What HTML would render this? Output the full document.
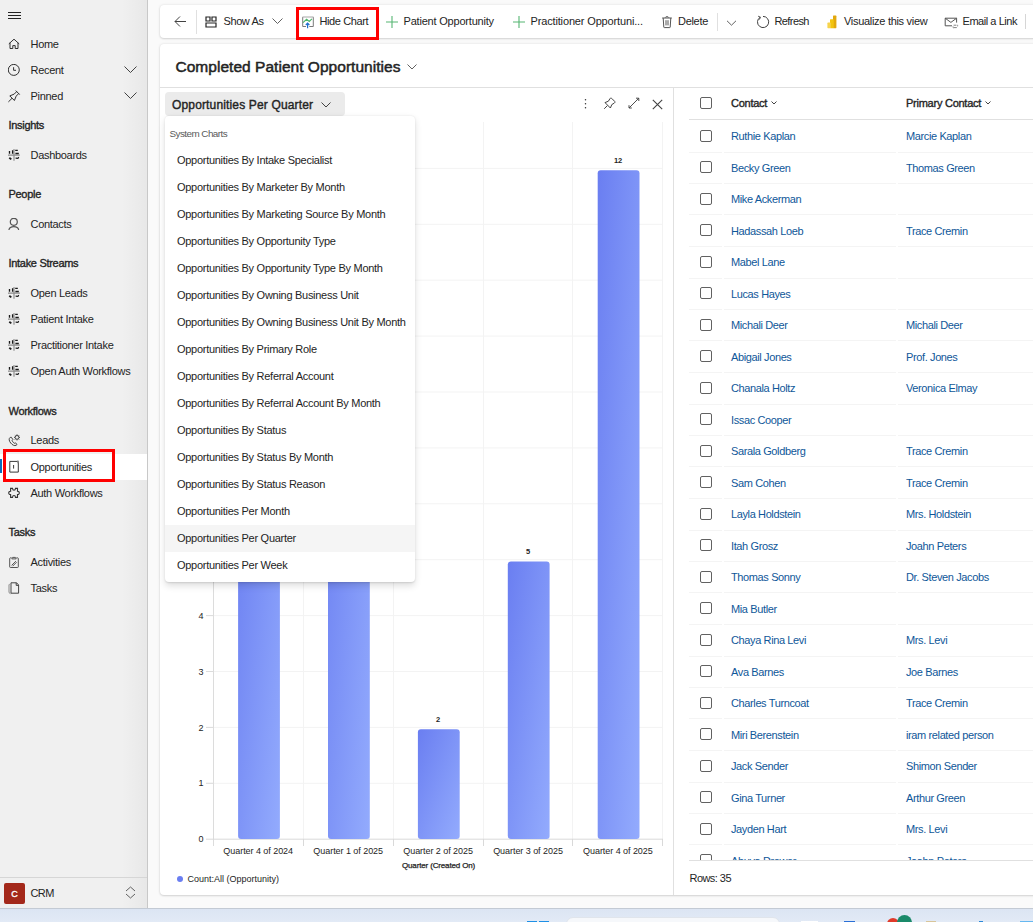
<!DOCTYPE html><html><head><meta charset="utf-8"><style>
html,body{margin:0;padding:0}
body{width:1033px;height:922px;overflow:hidden;position:relative;background:#fafafa;font-family:"Liberation Sans",sans-serif;color:#242424}
.a{position:absolute;white-space:nowrap}
</style></head><body>
<div class="a" style="left:0px;top:0px;width:147px;height:908px;background:#f0f0f0"></div>
<div class="a" style="left:122px;top:0px;width:25px;height:908px;background:linear-gradient(90deg,rgba(0,0,0,0),rgba(0,0,0,0.035))"></div>
<div class="a" style="left:147px;top:0px;width:1px;height:908px;background:#c8c8c8"></div>
<svg class="a" style="left:8px;top:11px;" width="14" height="9" viewBox="0 0 14 9" fill="none" stroke="#424242" stroke-width="1"><path d="M0 1.5H13M0 4.5H13M0 7.5H13" stroke="#242424"/></svg>
<div class="a" style="left:0px;top:454px;width:147px;height:26px;background:#ffffff"></div>
<div class="a" style="left:0px;top:459px;width:2px;height:14px;background:#0f6cbd"></div>
<svg class="a" style="left:8px;top:38px;" width="13" height="15" viewBox="0 0 13 15" fill="none" stroke="#424242" stroke-width="1"><path d="M0.8 5.9L6 1.2L11.2 5.9 M2 4.8V10.5H4.8V7.6H7.2V10.5H10V4.8" stroke="#303030"/></svg>
<div class="a" style="left:30.5px;top:37.19px;font-size:11px;line-height:14px;font-weight:400;color:#242424;letter-spacing:-0.3px;">Home</div>
<svg class="a" style="left:8px;top:64px;" width="13" height="15" viewBox="0 0 13 15" fill="none" stroke="#424242" stroke-width="1"><circle cx="5.8" cy="5.9" r="5.5" stroke="#303030"/><path d="M5.6 3.2V6.3H8" stroke="#303030"/></svg>
<div class="a" style="left:30.5px;top:63.19px;font-size:11px;line-height:14px;font-weight:400;color:#242424;letter-spacing:-0.3px;">Recent</div>
<svg class="a" style="left:8px;top:90px;" width="13" height="15" viewBox="0 0 13 15" fill="none" stroke="#424242" stroke-width="1"><path d="M7.7 0.6L11.7 4.6 M8.7 1.6L6.2 4.1L1.8 5.9L6.4 10.5L8.2 6.1L10.7 3.6 M4 8.3L0.4 11.9" stroke="#303030"/></svg>
<div class="a" style="left:30.5px;top:89.19px;font-size:11px;line-height:14px;font-weight:400;color:#242424;letter-spacing:-0.3px;">Pinned</div>
<svg class="a" style="left:8px;top:149px;" width="13" height="15" viewBox="0 0 13 15" fill="none" stroke="#424242" stroke-width="1"><path d="M6 0V11.8M0 6.1H11.8" stroke="#8a8a8a" stroke-width="1.15"/><path d="M1.5 2.1V4.7M4.6 1.2V4.7M7.2 1.4H9.8M7.4 4.5H10.8" stroke="#1a1a1a" stroke-width="1.35"/><path d="M1.3 8.7L3.3 10.4" stroke="#1a1a1a" stroke-width="1.8"/><path d="M7.6 9.2L9.9 9.3L10.8 8.2" stroke="#1a1a1a" stroke-width="1.2"/></svg>
<div class="a" style="left:30.5px;top:148.19px;font-size:11px;line-height:14px;font-weight:400;color:#242424;letter-spacing:-0.3px;">Dashboards</div>
<svg class="a" style="left:8px;top:218px;" width="13" height="15" viewBox="0 0 13 15" fill="none" stroke="#424242" stroke-width="1"><circle cx="5.8" cy="3.8" r="3.5" stroke="#555" stroke-width="1.2"/><path d="M0.9 12C1.4 9.6 3.3 8.7 5.8 8.7S10.2 9.6 10.7 12" stroke="#555" stroke-width="1.2"/></svg>
<div class="a" style="left:30.5px;top:217.19px;font-size:11px;line-height:14px;font-weight:400;color:#242424;letter-spacing:-0.3px;">Contacts</div>
<svg class="a" style="left:8px;top:287px;" width="13" height="15" viewBox="0 0 13 15" fill="none" stroke="#424242" stroke-width="1"><path d="M6 0V11.8M0 6.1H11.8" stroke="#8a8a8a" stroke-width="1.15"/><path d="M1.5 2.1V4.7M4.6 1.2V4.7M7.2 1.4H9.8M7.4 4.5H10.8" stroke="#1a1a1a" stroke-width="1.35"/><path d="M1.3 8.7L3.3 10.4" stroke="#1a1a1a" stroke-width="1.8"/><path d="M7.6 9.2L9.9 9.3L10.8 8.2" stroke="#1a1a1a" stroke-width="1.2"/></svg>
<div class="a" style="left:30.5px;top:286.19px;font-size:11px;line-height:14px;font-weight:400;color:#242424;letter-spacing:-0.3px;">Open Leads</div>
<svg class="a" style="left:8px;top:313px;" width="13" height="15" viewBox="0 0 13 15" fill="none" stroke="#424242" stroke-width="1"><path d="M6 0V11.8M0 6.1H11.8" stroke="#8a8a8a" stroke-width="1.15"/><path d="M1.5 2.1V4.7M4.6 1.2V4.7M7.2 1.4H9.8M7.4 4.5H10.8" stroke="#1a1a1a" stroke-width="1.35"/><path d="M1.3 8.7L3.3 10.4" stroke="#1a1a1a" stroke-width="1.8"/><path d="M7.6 9.2L9.9 9.3L10.8 8.2" stroke="#1a1a1a" stroke-width="1.2"/></svg>
<div class="a" style="left:30.5px;top:312.19px;font-size:11px;line-height:14px;font-weight:400;color:#242424;letter-spacing:-0.3px;">Patient Intake</div>
<svg class="a" style="left:8px;top:339px;" width="13" height="15" viewBox="0 0 13 15" fill="none" stroke="#424242" stroke-width="1"><path d="M6 0V11.8M0 6.1H11.8" stroke="#8a8a8a" stroke-width="1.15"/><path d="M1.5 2.1V4.7M4.6 1.2V4.7M7.2 1.4H9.8M7.4 4.5H10.8" stroke="#1a1a1a" stroke-width="1.35"/><path d="M1.3 8.7L3.3 10.4" stroke="#1a1a1a" stroke-width="1.8"/><path d="M7.6 9.2L9.9 9.3L10.8 8.2" stroke="#1a1a1a" stroke-width="1.2"/></svg>
<div class="a" style="left:30.5px;top:338.19px;font-size:11px;line-height:14px;font-weight:400;color:#242424;letter-spacing:-0.3px;">Practitioner Intake</div>
<svg class="a" style="left:8px;top:365px;" width="13" height="15" viewBox="0 0 13 15" fill="none" stroke="#424242" stroke-width="1"><path d="M6 0V11.8M0 6.1H11.8" stroke="#8a8a8a" stroke-width="1.15"/><path d="M1.5 2.1V4.7M4.6 1.2V4.7M7.2 1.4H9.8M7.4 4.5H10.8" stroke="#1a1a1a" stroke-width="1.35"/><path d="M1.3 8.7L3.3 10.4" stroke="#1a1a1a" stroke-width="1.8"/><path d="M7.6 9.2L9.9 9.3L10.8 8.2" stroke="#1a1a1a" stroke-width="1.2"/></svg>
<div class="a" style="left:30.5px;top:364.19px;font-size:11px;line-height:14px;font-weight:400;color:#242424;letter-spacing:-0.3px;">Open Auth Workflows</div>
<svg class="a" style="left:8px;top:434px;" width="13" height="15" viewBox="0 0 13 15" fill="none" stroke="#424242" stroke-width="1"><path d="M2.2 3.4C0.6 4.6 0.9 6.8 2.7 9C4.5 11.2 6.6 12.1 8 11.3L9 10.5L7.5 8.8L6.4 9.3C5.6 8.9 4.4 7.5 4.1 6.5L4.8 5.5L3.4 3.3Z" stroke="#404040"/><circle cx="9" cy="3.4" r="1.9" stroke="#404040"/><path d="M9 0.4V1.3M9 5.5V6.4M6 3.4H6.9M11.1 3.4H12M6.9 1.3L7.5 1.9M10.5 4.9L11.1 5.5M11.1 1.3L10.5 1.9M7.5 4.9L6.9 5.5" stroke="#404040"/></svg>
<div class="a" style="left:30.5px;top:433.19px;font-size:11px;line-height:14px;font-weight:400;color:#242424;letter-spacing:-0.3px;">Leads</div>
<svg class="a" style="left:8px;top:458px;" width="13" height="15" viewBox="0 0 13 15" fill="none" stroke="#424242" stroke-width="1"><path d="M1.8 3.4H10.3V14.1H1.8Z M5.6 7V10.6" stroke="#383838"/><path d="M9.9 2.4V5.2" stroke="#8a8a8a" stroke-width="1.3"/></svg>
<div class="a" style="left:30.5px;top:459.69px;font-size:11px;line-height:14px;font-weight:400;color:#242424;letter-spacing:-0.3px;">Opportunities</div>
<svg class="a" style="left:8px;top:486px;" width="13" height="15" viewBox="0 0 13 15" fill="none" stroke="#424242" stroke-width="1"><path d="M2.6 2.4H4.5C4.7 4.9 7.3 4.9 7.5 2.4H9.5V5.3C11.9 5.1 11.9 8.7 9.5 8.5V11.4H7.5C7.3 8.9 4.7 8.9 4.5 11.4H2.6V8.5C0.1 8.7 0.1 5.1 2.6 5.3Z" stroke="#333" stroke-width="1.1"/></svg>
<div class="a" style="left:30.5px;top:485.79px;font-size:11px;line-height:14px;font-weight:400;color:#242424;letter-spacing:-0.3px;">Auth Workflows</div>
<svg class="a" style="left:8px;top:556px;" width="13" height="15" viewBox="0 0 13 15" fill="none" stroke="#424242" stroke-width="1"><path d="M3.6 1.8H2.4C2 1.8 1.7 2.1 1.7 2.5V10.9C1.7 11.3 2 11.5 2.4 11.5H9.6C10 11.5 10.3 11.3 10.3 10.9V2.5C10.3 2.1 10 1.8 9.6 1.8H8.4 M3.8 2.9H8.2L7.4 1.4H4.6Z M3.6 9.4L7.9 5.1 M4.6 10.2L8.6 6.2" stroke="#555"/></svg>
<div class="a" style="left:30.5px;top:555.19px;font-size:11px;line-height:14px;font-weight:400;color:#242424;letter-spacing:-0.3px;">Activities</div>
<svg class="a" style="left:8px;top:582px;" width="13" height="15" viewBox="0 0 13 15" fill="none" stroke="#424242" stroke-width="1"><path d="M3 0.8H8.6L10.6 3V11.2H3Z M8.2 0.8V3.4H10.6" stroke="#444"/><path d="M2.2 1.6L1 2.8V10.6L2.6 11.8" stroke="#888"/></svg>
<div class="a" style="left:30.5px;top:581.19px;font-size:11px;line-height:14px;font-weight:400;color:#242424;letter-spacing:-0.3px;">Tasks</div>
<div class="a" style="left:8.5px;top:118.19px;font-size:11px;line-height:14px;font-weight:400;color:#242424;letter-spacing:-0.3px;-webkit-text-stroke:0.35px #242424">Insights</div>
<div class="a" style="left:8.5px;top:187.19px;font-size:11px;line-height:14px;font-weight:400;color:#242424;letter-spacing:-0.3px;-webkit-text-stroke:0.35px #242424">People</div>
<div class="a" style="left:8.5px;top:256.19px;font-size:11px;line-height:14px;font-weight:400;color:#242424;letter-spacing:-0.3px;-webkit-text-stroke:0.35px #242424">Intake Streams</div>
<div class="a" style="left:8.5px;top:404.19px;font-size:11px;line-height:14px;font-weight:400;color:#242424;letter-spacing:-0.3px;-webkit-text-stroke:0.35px #242424">Workflows</div>
<div class="a" style="left:8.5px;top:525.19px;font-size:11px;line-height:14px;font-weight:400;color:#242424;letter-spacing:-0.3px;-webkit-text-stroke:0.35px #242424">Tasks</div>
<svg class="a" style="left:124px;top:66px;" width="13" height="8" viewBox="0 0 13 8" fill="none" stroke="#424242" stroke-width="1"><path d="M0.5 0.5L6.5 6.5L12.5 0.5" stroke="#424242"/></svg>
<svg class="a" style="left:124px;top:92px;" width="13" height="8" viewBox="0 0 13 8" fill="none" stroke="#424242" stroke-width="1"><path d="M0.5 0.5L6.5 6.5L12.5 0.5" stroke="#424242"/></svg>
<div class="a" style="left:3px;top:449px;width:106px;height:27px;border:3px solid #ff0000"></div>
<div class="a" style="left:0px;top:877px;width:147px;height:1px;background:#d6d6d6"></div>
<div class="a" style="left:4px;top:883px;width:21px;height:21px;background:#a3281a;border-radius:2px"></div>
<div class="a" style="left:4.0px;top:887.88px;font-size:9px;line-height:12px;font-weight:400;color:#ffffff;letter-spacing:0px;-webkit-text-stroke:0.35px #fff"><span style="display:block;width:21px;text-align:center">C</span></div>
<div class="a" style="left:30.5px;top:886.49px;font-size:11px;line-height:14px;font-weight:400;color:#242424;letter-spacing:-0.6px;">CRM</div>
<svg class="a" style="left:125px;top:886px;" width="11" height="13" viewBox="0 0 11 13" fill="none" stroke="#424242" stroke-width="1"><path d="M1 5L5.5 1L10 5M1 8L5.5 12L10 8" stroke="#616161"/></svg>
<div class="a" style="left:0px;top:909px;width:1033px;height:13px;background:linear-gradient(180deg,#dce5f3,#e2eaf6)"></div>
<div class="a" style="left:0px;top:908px;width:1033px;height:1px;background:#c3cad4"></div>
<div class="a" style="left:527px;top:921px;width:10px;height:2px;background:#1e90e6"></div>
<div class="a" style="left:539px;top:921px;width:10px;height:2px;background:#1e90e6"></div>
<div class="a" style="left:566px;top:917px;width:212px;height:12px;background:#f6f8fb;border-radius:8px;border:1px solid #e0e5ec"></div>
<div class="a" style="left:801px;top:921px;width:17px;height:3px;background:#fff"></div>
<div class="a" style="left:844px;top:921px;width:11px;height:3px;background:#2a6fd6"></div>
<div class="a" style="left:887px;top:918px;width:12px;height:6px;background:#e03a2a;border-radius:6px 6px 0 0"></div>
<div class="a" style="left:897px;top:915px;width:15px;height:15px;background:#1a8a6a;border-radius:50%"></div>
<div class="a" style="left:926px;top:921px;width:10px;height:3px;background:#d8c59a"></div>
<div class="a" style="left:979px;top:921px;width:4px;height:3px;background:#2b88d8"></div>
<div class="a" style="left:1020px;top:921px;width:13px;height:3px;background:#66b8f0"></div>
<div class="a" style="left:160px;top:5px;width:900px;height:33px;background:#fff;border-radius:4px;box-shadow:0 0 3px rgba(0,0,0,.11),0 1px 2px rgba(0,0,0,.12)"></div>
<svg class="a" style="left:174px;top:16px;" width="13" height="11" viewBox="0 0 13 11" fill="none" stroke="#424242" stroke-width="1"><path d="M6 0.5L1 5.5L6 10.5M1 5.5H12" stroke="#424242"/></svg>
<div class="a" style="left:196px;top:10px;width:1px;height:24px;background:#e0e0e0"></div>
<svg class="a" style="left:205px;top:16px;" width="13" height="12" viewBox="0 0 13 12" fill="none" stroke="#424242" stroke-width="1"><path d="M1 1H5V5H1Z M7 1H11V5H7Z M1 7H11V11H1Z" stroke="#242424" stroke-width="1.2"/></svg>
<div class="a" style="left:223.5px;top:14.39px;font-size:11px;line-height:14px;font-weight:400;color:#242424;letter-spacing:-0.4px;">Show As</div>
<svg class="a" style="left:272px;top:18px;" width="11" height="7" viewBox="0 0 11 7" fill="none" stroke="#424242" stroke-width="1"><path d="M0.5 0.5L5.5 5.5L10.5 0.5" stroke="#616161"/></svg>
<div class="a" style="left:296px;top:7px;width:77px;height:27px;border:3px solid #ff0000"></div>
<svg class="a" style="left:302px;top:16px;" width="12" height="13" viewBox="0 0 12 13" fill="none" stroke="#424242" stroke-width="1"><path d="M0.5 1H11.5" stroke="#c8c8c8" stroke-width="1.6"/><path d="M4 10.5H0.7V1.2 M11.3 1.2V10.5H7.3" stroke="#7a7a7a"/><path d="M1 6.6L4.6 3.3L7.3 5.4L9.9 2.9" stroke="#4cb56a" stroke-width="1.1"/><path d="M5.6 12.2V7.4M3.8 9L5.6 7.2L7.4 9" stroke="#1f6fce" stroke-width="1.2"/></svg>
<div class="a" style="left:319.5px;top:14.39px;font-size:11px;line-height:14px;font-weight:400;color:#242424;letter-spacing:-0.4px;">Hide Chart</div>
<svg class="a" style="left:386px;top:16px;" width="12" height="12" viewBox="0 0 12 12" fill="none" stroke="#424242" stroke-width="1"><path d="M6 0V12M0 6H12" stroke="#56b673" stroke-width="1.1"/></svg>
<div class="a" style="left:403.5px;top:14.39px;font-size:11px;line-height:14px;font-weight:400;color:#242424;letter-spacing:-0.2px;">Patient Opportunity</div>
<svg class="a" style="left:513px;top:16px;" width="12" height="12" viewBox="0 0 12 12" fill="none" stroke="#424242" stroke-width="1"><path d="M6 0V12M0 6H12" stroke="#56b673" stroke-width="1.1"/></svg>
<div class="a" style="left:530.5px;top:14.39px;font-size:11px;line-height:14px;font-weight:400;color:#242424;letter-spacing:-0.15px;">Practitioner Opportuni...</div>
<svg class="a" style="left:661px;top:15px;" width="12" height="14" viewBox="0 0 12 14" fill="none" stroke="#424242" stroke-width="1"><path d="M1.2 3H10.8M4.2 2.6C4.4 1.4 7.6 1.4 7.8 2.6M2.2 3L2.8 12.2C2.8 12.5 3 12.6 3.3 12.6H8.7C9 12.6 9.2 12.5 9.2 12.2L9.8 3M5 5.2V10.4M7 5.2V10.4" stroke="#555"/></svg>
<div class="a" style="left:678.0px;top:14.39px;font-size:11px;line-height:14px;font-weight:400;color:#242424;letter-spacing:-0.3px;">Delete</div>
<div class="a" style="left:717px;top:13px;width:1px;height:18px;background:#e0e0e0"></div>
<svg class="a" style="left:726px;top:20px;" width="11" height="7" viewBox="0 0 11 7" fill="none" stroke="#424242" stroke-width="1"><path d="M1 0.8L5.5 5.2L10 0.8" stroke="#616161"/></svg>
<svg class="a" style="left:756px;top:15px;" width="14" height="14" viewBox="0 0 14 14" fill="none" stroke="#424242" stroke-width="1"><path d="M4.2 2.2A5.6 5.6 0 1 0 7 1.4" stroke="#424242"/><path d="M2.2 1.2L4.4 2.3L3.4 4.5" stroke="#424242"/></svg>
<div class="a" style="left:774.5px;top:14.39px;font-size:11px;line-height:14px;font-weight:400;color:#242424;letter-spacing:-0.6px;">Refresh</div>
<svg class="a" style="left:827px;top:15px;" width="10" height="14" viewBox="0 0 10 14" fill="none" stroke="#424242" stroke-width="1"><rect x="6" y="0.6" width="3.4" height="12.6" rx="0.6" fill="#e2a80e" stroke="none"/><rect x="3" y="4.2" width="3.8" height="9" rx="0.6" fill="#f2c40f" stroke="none"/><rect x="0.4" y="7.6" width="3.4" height="5.6" rx="0.6" fill="#f7d44c" stroke="none"/></svg>
<div class="a" style="left:844.0px;top:14.39px;font-size:11px;line-height:14px;font-weight:400;color:#242424;letter-spacing:-0.3px;">Visualize this view</div>
<svg class="a" style="left:944px;top:17px;" width="15" height="12" viewBox="0 0 15 12" fill="none" stroke="#424242" stroke-width="1"><path d="M1.2 1.2H12.6V5.6M8 8.8H1.2V1.2L6.9 5.4L12.6 1.2" stroke="#555"/><path d="M9.6 8.2H12M10 10.6H12.8M9 9.4C8.6 10.4 9.2 11 10 10.6M13.6 9.4C14 8.4 13.4 7.8 12.6 8.2" stroke="#777" stroke-width="0.9"/></svg>
<div class="a" style="left:962.5px;top:14.39px;font-size:11px;line-height:14px;font-weight:400;color:#242424;letter-spacing:-0.45px;">Email a Link</div>
<div class="a" style="left:1025px;top:14px;width:1px;height:15px;background:#d6d6d6"></div>
<div class="a" style="left:160px;top:44px;width:900px;height:851px;background:#fff;border-radius:4px;box-shadow:0 0 3px rgba(0,0,0,.11),0 1px 2px rgba(0,0,0,.12)"></div>
<div class="a" style="left:175.5px;top:56.93px;font-size:15.5px;line-height:20px;font-weight:400;color:#242424;letter-spacing:0.03px;-webkit-text-stroke:0.5px #242424">Completed Patient Opportunities</div>
<svg class="a" style="left:407px;top:64px;" width="10" height="6" viewBox="0 0 10 6" fill="none" stroke="#424242" stroke-width="1"><path d="M0.5 0.5L5 5L9.5 0.5" stroke="#616161"/></svg>
<div class="a" style="left:160px;top:87px;width:900px;height:1px;background:#e0e0e0"></div>
<div class="a" style="left:673px;top:88px;width:1px;height:807px;background:#e0e0e0"></div>
<svg class="a" style="left:0;top:0" width="1033" height="922"><defs><linearGradient id="g" x1="0" y1="0" x2="1" y2="1"><stop offset="0" stop-color="#6a7ef1"/><stop offset="1" stop-color="#93abfd"/></linearGradient></defs><line x1="206" y1="783.3" x2="663" y2="783.3" stroke="#f3f3f3" stroke-width="1"/><line x1="206" y1="783.3" x2="213.3" y2="783.3" stroke="#dcdcdc" stroke-width="1"/><line x1="206" y1="727.4" x2="663" y2="727.4" stroke="#f3f3f3" stroke-width="1"/><line x1="206" y1="727.4" x2="213.3" y2="727.4" stroke="#dcdcdc" stroke-width="1"/><line x1="206" y1="671.5" x2="663" y2="671.5" stroke="#f3f3f3" stroke-width="1"/><line x1="206" y1="671.5" x2="213.3" y2="671.5" stroke="#dcdcdc" stroke-width="1"/><line x1="206" y1="615.6" x2="663" y2="615.6" stroke="#f3f3f3" stroke-width="1"/><line x1="206" y1="615.6" x2="213.3" y2="615.6" stroke="#dcdcdc" stroke-width="1"/><line x1="206" y1="559.7" x2="663" y2="559.7" stroke="#f3f3f3" stroke-width="1"/><line x1="206" y1="559.7" x2="213.3" y2="559.7" stroke="#dcdcdc" stroke-width="1"/><line x1="206" y1="503.8" x2="663" y2="503.8" stroke="#f3f3f3" stroke-width="1"/><line x1="206" y1="503.8" x2="213.3" y2="503.8" stroke="#dcdcdc" stroke-width="1"/><line x1="206" y1="447.9" x2="663" y2="447.9" stroke="#f3f3f3" stroke-width="1"/><line x1="206" y1="447.9" x2="213.3" y2="447.9" stroke="#dcdcdc" stroke-width="1"/><line x1="206" y1="392.0" x2="663" y2="392.0" stroke="#f3f3f3" stroke-width="1"/><line x1="206" y1="392.0" x2="213.3" y2="392.0" stroke="#dcdcdc" stroke-width="1"/><line x1="206" y1="336.1" x2="663" y2="336.1" stroke="#f3f3f3" stroke-width="1"/><line x1="206" y1="336.1" x2="213.3" y2="336.1" stroke="#dcdcdc" stroke-width="1"/><line x1="206" y1="280.2" x2="663" y2="280.2" stroke="#f3f3f3" stroke-width="1"/><line x1="206" y1="280.2" x2="213.3" y2="280.2" stroke="#dcdcdc" stroke-width="1"/><line x1="206" y1="224.3" x2="663" y2="224.3" stroke="#f3f3f3" stroke-width="1"/><line x1="206" y1="224.3" x2="213.3" y2="224.3" stroke="#dcdcdc" stroke-width="1"/><line x1="206" y1="168.4" x2="663" y2="168.4" stroke="#f3f3f3" stroke-width="1"/><line x1="206" y1="168.4" x2="213.3" y2="168.4" stroke="#dcdcdc" stroke-width="1"/><line x1="303.5" y1="122" x2="303.5" y2="839" stroke="#f3f3f3" stroke-width="1"/><line x1="303.5" y1="839" x2="303.5" y2="846" stroke="#d9d9d9" stroke-width="1"/><line x1="393.5" y1="122" x2="393.5" y2="839" stroke="#f3f3f3" stroke-width="1"/><line x1="393.5" y1="839" x2="393.5" y2="846" stroke="#d9d9d9" stroke-width="1"/><line x1="483.5" y1="122" x2="483.5" y2="839" stroke="#f3f3f3" stroke-width="1"/><line x1="483.5" y1="839" x2="483.5" y2="846" stroke="#d9d9d9" stroke-width="1"/><line x1="572.5" y1="122" x2="572.5" y2="839" stroke="#f3f3f3" stroke-width="1"/><line x1="572.5" y1="839" x2="572.5" y2="846" stroke="#d9d9d9" stroke-width="1"/><line x1="662.5" y1="122" x2="662.5" y2="839" stroke="#f3f3f3" stroke-width="1"/><line x1="662.5" y1="839" x2="662.5" y2="846" stroke="#d9d9d9" stroke-width="1"/><line x1="213.5" y1="122" x2="213.5" y2="846" stroke="#dcdcdc" stroke-width="1"/><line x1="206" y1="839.2" x2="663" y2="839.2" stroke="#d9d9d9" stroke-width="1"/><rect x="238.1" y="449.7" width="41.8" height="389.2" rx="3" fill="url(#g)"/><rect x="328.0" y="337.9" width="41.8" height="501.0" rx="3" fill="url(#g)"/><rect x="417.9" y="729.2" width="41.8" height="109.7" rx="3" fill="url(#g)"/><rect x="507.8" y="561.5" width="41.8" height="277.4" rx="3" fill="url(#g)"/><rect x="597.7" y="170.2" width="41.8" height="668.7" rx="3" fill="url(#g)"/></svg>
<div class="a" style="left:103.5px;width:100px;text-align:right;top:833.38px;font-size:9px;line-height:12px;font-weight:400;color:#242424;letter-spacing:0px">0</div>
<div class="a" style="left:103.5px;width:100px;text-align:right;top:777.48px;font-size:9px;line-height:12px;font-weight:400;color:#242424;letter-spacing:0px">1</div>
<div class="a" style="left:103.5px;width:100px;text-align:right;top:721.58px;font-size:9px;line-height:12px;font-weight:400;color:#242424;letter-spacing:0px">2</div>
<div class="a" style="left:103.5px;width:100px;text-align:right;top:665.68px;font-size:9px;line-height:12px;font-weight:400;color:#242424;letter-spacing:0px">3</div>
<div class="a" style="left:103.5px;width:100px;text-align:right;top:609.78px;font-size:9px;line-height:12px;font-weight:400;color:#242424;letter-spacing:0px">4</div>
<div class="a" style="left:103.5px;width:100px;text-align:right;top:553.88px;font-size:9px;line-height:12px;font-weight:400;color:#242424;letter-spacing:0px">5</div>
<div class="a" style="left:103.5px;width:100px;text-align:right;top:497.98px;font-size:9px;line-height:12px;font-weight:400;color:#242424;letter-spacing:0px">6</div>
<div class="a" style="left:103.5px;width:100px;text-align:right;top:442.08px;font-size:9px;line-height:12px;font-weight:400;color:#242424;letter-spacing:0px">7</div>
<div class="a" style="left:103.5px;width:100px;text-align:right;top:386.18px;font-size:9px;line-height:12px;font-weight:400;color:#242424;letter-spacing:0px">8</div>
<div class="a" style="left:103.5px;width:100px;text-align:right;top:330.28px;font-size:9px;line-height:12px;font-weight:400;color:#242424;letter-spacing:0px">9</div>
<div class="a" style="left:103.5px;width:100px;text-align:right;top:274.38px;font-size:9px;line-height:12px;font-weight:400;color:#242424;letter-spacing:0px">10</div>
<div class="a" style="left:103.5px;width:100px;text-align:right;top:218.48px;font-size:9px;line-height:12px;font-weight:400;color:#242424;letter-spacing:0px">11</div>
<div class="a" style="left:103.5px;width:100px;text-align:right;top:162.58px;font-size:9px;line-height:12px;font-weight:400;color:#242424;letter-spacing:0px">12</div>
<div class="a" style="left:108.2px;width:300px;text-align:center;top:435.50px;font-size:7.5px;line-height:10px;font-weight:700;color:#242424;letter-spacing:-0.2px;">7</div>
<div class="a" style="left:198.2px;width:300px;text-align:center;top:323.70px;font-size:7.5px;line-height:10px;font-weight:700;color:#242424;letter-spacing:-0.2px;">9</div>
<div class="a" style="left:288.1px;width:300px;text-align:center;top:715.00px;font-size:7.5px;line-height:10px;font-weight:700;color:#242424;letter-spacing:-0.2px;">2</div>
<div class="a" style="left:378.0px;width:300px;text-align:center;top:547.30px;font-size:7.5px;line-height:10px;font-weight:700;color:#242424;letter-spacing:-0.2px;">5</div>
<div class="a" style="left:467.9px;width:300px;text-align:center;top:156.00px;font-size:7.5px;line-height:10px;font-weight:700;color:#242424;letter-spacing:-0.2px;">12</div>
<div class="a" style="left:108.2px;width:300px;text-align:center;top:844.68px;font-size:9px;line-height:12px;font-weight:400;color:#242424;letter-spacing:-0.05px;">Quarter 4 of 2024</div>
<div class="a" style="left:198.2px;width:300px;text-align:center;top:844.68px;font-size:9px;line-height:12px;font-weight:400;color:#242424;letter-spacing:-0.05px;">Quarter 1 of 2025</div>
<div class="a" style="left:288.1px;width:300px;text-align:center;top:844.68px;font-size:9px;line-height:12px;font-weight:400;color:#242424;letter-spacing:-0.05px;">Quarter 2 of 2025</div>
<div class="a" style="left:378.0px;width:300px;text-align:center;top:844.68px;font-size:9px;line-height:12px;font-weight:400;color:#242424;letter-spacing:-0.05px;">Quarter 3 of 2025</div>
<div class="a" style="left:467.9px;width:300px;text-align:center;top:844.68px;font-size:9px;line-height:12px;font-weight:400;color:#242424;letter-spacing:-0.05px;">Quarter 4 of 2025</div>
<div class="a" style="left:288.5px;width:300px;text-align:center;top:861.23px;font-size:8px;line-height:10px;font-weight:400;color:#242424;letter-spacing:-0.15px;-webkit-text-stroke:0.25px #242424">Quarter (Created On)</div>
<div class="a" style="left:177px;top:876px;width:6px;height:6px;background:#6a7ef1;border-radius:50%"></div>
<div class="a" style="left:187.4px;top:872.68px;font-size:9px;line-height:12px;font-weight:400;color:#242424;letter-spacing:0px;">Count:All (Opportunity)</div>
<div class="a" style="left:165px;top:92px;width:180px;height:24px;background:#ebebeb;border-radius:4px"></div>
<div class="a" style="left:172.0px;top:98.34px;font-size:12px;line-height:15px;font-weight:400;color:#242424;letter-spacing:0.15px;-webkit-text-stroke:0.4px #242424">Opportunities Per Quarter</div>
<svg class="a" style="left:321px;top:102px;" width="10" height="6" viewBox="0 0 10 6" fill="none" stroke="#424242" stroke-width="1"><path d="M0.5 0.5L5 5L9.5 0.5" stroke="#424242"/></svg>
<svg class="a" style="left:584px;top:98px;" width="3" height="12" viewBox="0 0 3 12" fill="none" stroke="#424242" stroke-width="1"><circle cx="1.5" cy="1.8" r="0.75" fill="#333" stroke="none"/><circle cx="1.5" cy="5.8" r="0.75" fill="#333" stroke="none"/><circle cx="1.5" cy="9.8" r="0.75" fill="#333" stroke="none"/></svg>
<svg class="a" style="left:603px;top:97px;" width="13" height="13" viewBox="0 0 13 13" fill="none" stroke="#424242" stroke-width="1"><path d="M7 1.6C7.4 1 8.2 0.9 8.7 1.4L11.6 4.3C12.1 4.8 12 5.6 11.4 6L8.8 7.6L7.4 11L2 5.6L5.4 4.2Z M4.4 8.6L1.2 11.8" stroke="#424242"/></svg>
<svg class="a" style="left:627px;top:97px;" width="13" height="13" viewBox="0 0 13 13" fill="none" stroke="#424242" stroke-width="1"><path d="M2 11L11.8 1.2M9 1.2H11.8V4M2 8.2V11H4.8" stroke="#424242" stroke-width="0.95"/></svg>
<svg class="a" style="left:652px;top:99px;" width="11" height="11" viewBox="0 0 11 11" fill="none" stroke="#424242" stroke-width="1"><path d="M0.8 0.8L10.2 10.2M10.2 0.8L0.8 10.2" stroke="#424242" stroke-width="1.1"/></svg>
<div class="a" style="left:689px;top:119px;width:344px;height:1px;background:#e0e0e0"></div>
<div class="a" style="left:700px;top:97px;width:10px;height:10px;border:1.3px solid #616161;border-radius:2px;background:#fff"></div>
<div class="a" style="left:731.0px;top:96.19px;font-size:11px;line-height:14px;font-weight:400;color:#242424;letter-spacing:-0.25px;-webkit-text-stroke:0.35px #242424">Contact</div>
<svg class="a" style="left:771px;top:101px;" width="6" height="4" viewBox="0 0 6 4" fill="none" stroke="#424242" stroke-width="1"><path d="M0.5 0.5L3 3L5.5 0.5" stroke="#424242"/></svg>
<div class="a" style="left:906.0px;top:96.19px;font-size:11px;line-height:14px;font-weight:400;color:#242424;letter-spacing:-0.25px;-webkit-text-stroke:0.35px #242424">Primary Contact</div>
<svg class="a" style="left:985px;top:101px;" width="6" height="4" viewBox="0 0 6 4" fill="none" stroke="#424242" stroke-width="1"><path d="M0.5 0.5L3 3L5.5 0.5" stroke="#424242"/></svg>
<div class="a" style="left:674px;top:120px;width:359px;height:740px;overflow:hidden"><div class="a" style="left:26px;top:10px;width:10px;height:10px;border:1.3px solid #616161;border-radius:2px;background:#fff"></div><div class="a" style="left:57.0px;top:9.09px;font-size:11px;line-height:14px;font-weight:400;color:#0f5799;letter-spacing:-0.38px;">Ruthie Kaplan</div><div class="a" style="left:232.0px;top:9.09px;font-size:11px;line-height:14px;font-weight:400;color:#0f5799;letter-spacing:-0.38px;">Marcie Kaplan</div><div class="a" style="left:15px;top:32px;width:33px;height:1px;background:#f4f4f4"></div><div class="a" style="left:50px;top:32px;width:172px;height:1px;background:#f4f4f4"></div><div class="a" style="left:224px;top:32px;width:140px;height:1px;background:#f4f4f4"></div><div class="a" style="left:26px;top:41px;width:10px;height:10px;border:1.3px solid #616161;border-radius:2px;background:#fff"></div><div class="a" style="left:57.0px;top:40.59px;font-size:11px;line-height:14px;font-weight:400;color:#0f5799;letter-spacing:-0.38px;">Becky Green</div><div class="a" style="left:232.0px;top:40.59px;font-size:11px;line-height:14px;font-weight:400;color:#0f5799;letter-spacing:-0.38px;">Thomas Green</div><div class="a" style="left:15px;top:63px;width:33px;height:1px;background:#f4f4f4"></div><div class="a" style="left:50px;top:63px;width:172px;height:1px;background:#f4f4f4"></div><div class="a" style="left:224px;top:63px;width:140px;height:1px;background:#f4f4f4"></div><div class="a" style="left:26px;top:73px;width:10px;height:10px;border:1.3px solid #616161;border-radius:2px;background:#fff"></div><div class="a" style="left:57.0px;top:72.09px;font-size:11px;line-height:14px;font-weight:400;color:#0f5799;letter-spacing:-0.38px;">Mike Ackerman</div><div class="a" style="left:15px;top:94px;width:33px;height:1px;background:#f4f4f4"></div><div class="a" style="left:50px;top:94px;width:172px;height:1px;background:#f4f4f4"></div><div class="a" style="left:224px;top:94px;width:140px;height:1px;background:#f4f4f4"></div><div class="a" style="left:26px;top:104px;width:10px;height:10px;border:1.3px solid #616161;border-radius:2px;background:#fff"></div><div class="a" style="left:57.0px;top:103.59px;font-size:11px;line-height:14px;font-weight:400;color:#0f5799;letter-spacing:-0.38px;">Hadassah Loeb</div><div class="a" style="left:232.0px;top:103.59px;font-size:11px;line-height:14px;font-weight:400;color:#0f5799;letter-spacing:-0.38px;">Trace Cremin</div><div class="a" style="left:15px;top:126px;width:33px;height:1px;background:#f4f4f4"></div><div class="a" style="left:50px;top:126px;width:172px;height:1px;background:#f4f4f4"></div><div class="a" style="left:224px;top:126px;width:140px;height:1px;background:#f4f4f4"></div><div class="a" style="left:26px;top:136px;width:10px;height:10px;border:1.3px solid #616161;border-radius:2px;background:#fff"></div><div class="a" style="left:57.0px;top:135.09px;font-size:11px;line-height:14px;font-weight:400;color:#0f5799;letter-spacing:-0.38px;">Mabel Lane</div><div class="a" style="left:15px;top:158px;width:33px;height:1px;background:#f4f4f4"></div><div class="a" style="left:50px;top:158px;width:172px;height:1px;background:#f4f4f4"></div><div class="a" style="left:224px;top:158px;width:140px;height:1px;background:#f4f4f4"></div><div class="a" style="left:26px;top:167px;width:10px;height:10px;border:1.3px solid #616161;border-radius:2px;background:#fff"></div><div class="a" style="left:57.0px;top:166.59px;font-size:11px;line-height:14px;font-weight:400;color:#0f5799;letter-spacing:-0.38px;">Lucas Hayes</div><div class="a" style="left:15px;top:189px;width:33px;height:1px;background:#f4f4f4"></div><div class="a" style="left:50px;top:189px;width:172px;height:1px;background:#f4f4f4"></div><div class="a" style="left:224px;top:189px;width:140px;height:1px;background:#f4f4f4"></div><div class="a" style="left:26px;top:199px;width:10px;height:10px;border:1.3px solid #616161;border-radius:2px;background:#fff"></div><div class="a" style="left:57.0px;top:198.09px;font-size:11px;line-height:14px;font-weight:400;color:#0f5799;letter-spacing:-0.38px;">Michali Deer</div><div class="a" style="left:232.0px;top:198.09px;font-size:11px;line-height:14px;font-weight:400;color:#0f5799;letter-spacing:-0.38px;">Michali Deer</div><div class="a" style="left:15px;top:220px;width:33px;height:1px;background:#f4f4f4"></div><div class="a" style="left:50px;top:220px;width:172px;height:1px;background:#f4f4f4"></div><div class="a" style="left:224px;top:220px;width:140px;height:1px;background:#f4f4f4"></div><div class="a" style="left:26px;top:230px;width:10px;height:10px;border:1.3px solid #616161;border-radius:2px;background:#fff"></div><div class="a" style="left:57.0px;top:229.59px;font-size:11px;line-height:14px;font-weight:400;color:#0f5799;letter-spacing:-0.38px;">Abigail Jones</div><div class="a" style="left:232.0px;top:229.59px;font-size:11px;line-height:14px;font-weight:400;color:#0f5799;letter-spacing:-0.38px;">Prof. Jones</div><div class="a" style="left:15px;top:252px;width:33px;height:1px;background:#f4f4f4"></div><div class="a" style="left:50px;top:252px;width:172px;height:1px;background:#f4f4f4"></div><div class="a" style="left:224px;top:252px;width:140px;height:1px;background:#f4f4f4"></div><div class="a" style="left:26px;top:262px;width:10px;height:10px;border:1.3px solid #616161;border-radius:2px;background:#fff"></div><div class="a" style="left:57.0px;top:261.09px;font-size:11px;line-height:14px;font-weight:400;color:#0f5799;letter-spacing:-0.38px;">Chanala Holtz</div><div class="a" style="left:232.0px;top:261.09px;font-size:11px;line-height:14px;font-weight:400;color:#0f5799;letter-spacing:-0.38px;">Veronica Elmay</div><div class="a" style="left:15px;top:284px;width:33px;height:1px;background:#f4f4f4"></div><div class="a" style="left:50px;top:284px;width:172px;height:1px;background:#f4f4f4"></div><div class="a" style="left:224px;top:284px;width:140px;height:1px;background:#f4f4f4"></div><div class="a" style="left:26px;top:293px;width:10px;height:10px;border:1.3px solid #616161;border-radius:2px;background:#fff"></div><div class="a" style="left:57.0px;top:292.59px;font-size:11px;line-height:14px;font-weight:400;color:#0f5799;letter-spacing:-0.38px;">Issac Cooper</div><div class="a" style="left:15px;top:315px;width:33px;height:1px;background:#f4f4f4"></div><div class="a" style="left:50px;top:315px;width:172px;height:1px;background:#f4f4f4"></div><div class="a" style="left:224px;top:315px;width:140px;height:1px;background:#f4f4f4"></div><div class="a" style="left:26px;top:325px;width:10px;height:10px;border:1.3px solid #616161;border-radius:2px;background:#fff"></div><div class="a" style="left:57.0px;top:324.09px;font-size:11px;line-height:14px;font-weight:400;color:#0f5799;letter-spacing:-0.38px;">Sarala Goldberg</div><div class="a" style="left:232.0px;top:324.09px;font-size:11px;line-height:14px;font-weight:400;color:#0f5799;letter-spacing:-0.38px;">Trace Cremin</div><div class="a" style="left:15px;top:346px;width:33px;height:1px;background:#f4f4f4"></div><div class="a" style="left:50px;top:346px;width:172px;height:1px;background:#f4f4f4"></div><div class="a" style="left:224px;top:346px;width:140px;height:1px;background:#f4f4f4"></div><div class="a" style="left:26px;top:356px;width:10px;height:10px;border:1.3px solid #616161;border-radius:2px;background:#fff"></div><div class="a" style="left:57.0px;top:355.59px;font-size:11px;line-height:14px;font-weight:400;color:#0f5799;letter-spacing:-0.38px;">Sam Cohen</div><div class="a" style="left:232.0px;top:355.59px;font-size:11px;line-height:14px;font-weight:400;color:#0f5799;letter-spacing:-0.38px;">Trace Cremin</div><div class="a" style="left:15px;top:378px;width:33px;height:1px;background:#f4f4f4"></div><div class="a" style="left:50px;top:378px;width:172px;height:1px;background:#f4f4f4"></div><div class="a" style="left:224px;top:378px;width:140px;height:1px;background:#f4f4f4"></div><div class="a" style="left:26px;top:388px;width:10px;height:10px;border:1.3px solid #616161;border-radius:2px;background:#fff"></div><div class="a" style="left:57.0px;top:387.09px;font-size:11px;line-height:14px;font-weight:400;color:#0f5799;letter-spacing:-0.38px;">Layla Holdstein</div><div class="a" style="left:232.0px;top:387.09px;font-size:11px;line-height:14px;font-weight:400;color:#0f5799;letter-spacing:-0.38px;">Mrs. Holdstein</div><div class="a" style="left:15px;top:410px;width:33px;height:1px;background:#f4f4f4"></div><div class="a" style="left:50px;top:410px;width:172px;height:1px;background:#f4f4f4"></div><div class="a" style="left:224px;top:410px;width:140px;height:1px;background:#f4f4f4"></div><div class="a" style="left:26px;top:419px;width:10px;height:10px;border:1.3px solid #616161;border-radius:2px;background:#fff"></div><div class="a" style="left:57.0px;top:418.59px;font-size:11px;line-height:14px;font-weight:400;color:#0f5799;letter-spacing:-0.38px;">Itah Grosz</div><div class="a" style="left:232.0px;top:418.59px;font-size:11px;line-height:14px;font-weight:400;color:#0f5799;letter-spacing:-0.38px;">Joahn Peters</div><div class="a" style="left:15px;top:441px;width:33px;height:1px;background:#f4f4f4"></div><div class="a" style="left:50px;top:441px;width:172px;height:1px;background:#f4f4f4"></div><div class="a" style="left:224px;top:441px;width:140px;height:1px;background:#f4f4f4"></div><div class="a" style="left:26px;top:451px;width:10px;height:10px;border:1.3px solid #616161;border-radius:2px;background:#fff"></div><div class="a" style="left:57.0px;top:450.09px;font-size:11px;line-height:14px;font-weight:400;color:#0f5799;letter-spacing:-0.38px;">Thomas Sonny</div><div class="a" style="left:232.0px;top:450.09px;font-size:11px;line-height:14px;font-weight:400;color:#0f5799;letter-spacing:-0.38px;">Dr. Steven Jacobs</div><div class="a" style="left:15px;top:472px;width:33px;height:1px;background:#f4f4f4"></div><div class="a" style="left:50px;top:472px;width:172px;height:1px;background:#f4f4f4"></div><div class="a" style="left:224px;top:472px;width:140px;height:1px;background:#f4f4f4"></div><div class="a" style="left:26px;top:482px;width:10px;height:10px;border:1.3px solid #616161;border-radius:2px;background:#fff"></div><div class="a" style="left:57.0px;top:481.59px;font-size:11px;line-height:14px;font-weight:400;color:#0f5799;letter-spacing:-0.38px;">Mia Butler</div><div class="a" style="left:15px;top:504px;width:33px;height:1px;background:#f4f4f4"></div><div class="a" style="left:50px;top:504px;width:172px;height:1px;background:#f4f4f4"></div><div class="a" style="left:224px;top:504px;width:140px;height:1px;background:#f4f4f4"></div><div class="a" style="left:26px;top:514px;width:10px;height:10px;border:1.3px solid #616161;border-radius:2px;background:#fff"></div><div class="a" style="left:57.0px;top:513.09px;font-size:11px;line-height:14px;font-weight:400;color:#0f5799;letter-spacing:-0.38px;">Chaya Rina Levi</div><div class="a" style="left:232.0px;top:513.09px;font-size:11px;line-height:14px;font-weight:400;color:#0f5799;letter-spacing:-0.38px;">Mrs. Levi</div><div class="a" style="left:15px;top:536px;width:33px;height:1px;background:#f4f4f4"></div><div class="a" style="left:50px;top:536px;width:172px;height:1px;background:#f4f4f4"></div><div class="a" style="left:224px;top:536px;width:140px;height:1px;background:#f4f4f4"></div><div class="a" style="left:26px;top:545px;width:10px;height:10px;border:1.3px solid #616161;border-radius:2px;background:#fff"></div><div class="a" style="left:57.0px;top:544.59px;font-size:11px;line-height:14px;font-weight:400;color:#0f5799;letter-spacing:-0.38px;">Ava Barnes</div><div class="a" style="left:232.0px;top:544.59px;font-size:11px;line-height:14px;font-weight:400;color:#0f5799;letter-spacing:-0.38px;">Joe Barnes</div><div class="a" style="left:15px;top:567px;width:33px;height:1px;background:#f4f4f4"></div><div class="a" style="left:50px;top:567px;width:172px;height:1px;background:#f4f4f4"></div><div class="a" style="left:224px;top:567px;width:140px;height:1px;background:#f4f4f4"></div><div class="a" style="left:26px;top:577px;width:10px;height:10px;border:1.3px solid #616161;border-radius:2px;background:#fff"></div><div class="a" style="left:57.0px;top:576.09px;font-size:11px;line-height:14px;font-weight:400;color:#0f5799;letter-spacing:-0.38px;">Charles Turncoat</div><div class="a" style="left:232.0px;top:576.09px;font-size:11px;line-height:14px;font-weight:400;color:#0f5799;letter-spacing:-0.38px;">Trace Cremin</div><div class="a" style="left:15px;top:598px;width:33px;height:1px;background:#f4f4f4"></div><div class="a" style="left:50px;top:598px;width:172px;height:1px;background:#f4f4f4"></div><div class="a" style="left:224px;top:598px;width:140px;height:1px;background:#f4f4f4"></div><div class="a" style="left:26px;top:608px;width:10px;height:10px;border:1.3px solid #616161;border-radius:2px;background:#fff"></div><div class="a" style="left:57.0px;top:607.59px;font-size:11px;line-height:14px;font-weight:400;color:#0f5799;letter-spacing:-0.38px;">Miri Berenstein</div><div class="a" style="left:232.0px;top:607.59px;font-size:11px;line-height:14px;font-weight:400;color:#0f5799;letter-spacing:-0.38px;">iram related person</div><div class="a" style="left:15px;top:630px;width:33px;height:1px;background:#f4f4f4"></div><div class="a" style="left:50px;top:630px;width:172px;height:1px;background:#f4f4f4"></div><div class="a" style="left:224px;top:630px;width:140px;height:1px;background:#f4f4f4"></div><div class="a" style="left:26px;top:640px;width:10px;height:10px;border:1.3px solid #616161;border-radius:2px;background:#fff"></div><div class="a" style="left:57.0px;top:639.09px;font-size:11px;line-height:14px;font-weight:400;color:#0f5799;letter-spacing:-0.38px;">Jack Sender</div><div class="a" style="left:232.0px;top:639.09px;font-size:11px;line-height:14px;font-weight:400;color:#0f5799;letter-spacing:-0.38px;">Shimon Sender</div><div class="a" style="left:15px;top:662px;width:33px;height:1px;background:#f4f4f4"></div><div class="a" style="left:50px;top:662px;width:172px;height:1px;background:#f4f4f4"></div><div class="a" style="left:224px;top:662px;width:140px;height:1px;background:#f4f4f4"></div><div class="a" style="left:26px;top:671px;width:10px;height:10px;border:1.3px solid #616161;border-radius:2px;background:#fff"></div><div class="a" style="left:57.0px;top:670.59px;font-size:11px;line-height:14px;font-weight:400;color:#0f5799;letter-spacing:-0.38px;">Gina Turner</div><div class="a" style="left:232.0px;top:670.59px;font-size:11px;line-height:14px;font-weight:400;color:#0f5799;letter-spacing:-0.38px;">Arthur Green</div><div class="a" style="left:15px;top:693px;width:33px;height:1px;background:#f4f4f4"></div><div class="a" style="left:50px;top:693px;width:172px;height:1px;background:#f4f4f4"></div><div class="a" style="left:224px;top:693px;width:140px;height:1px;background:#f4f4f4"></div><div class="a" style="left:26px;top:703px;width:10px;height:10px;border:1.3px solid #616161;border-radius:2px;background:#fff"></div><div class="a" style="left:57.0px;top:702.09px;font-size:11px;line-height:14px;font-weight:400;color:#0f5799;letter-spacing:-0.38px;">Jayden Hart</div><div class="a" style="left:232.0px;top:702.09px;font-size:11px;line-height:14px;font-weight:400;color:#0f5799;letter-spacing:-0.38px;">Mrs. Levi</div><div class="a" style="left:15px;top:724px;width:33px;height:1px;background:#f4f4f4"></div><div class="a" style="left:50px;top:724px;width:172px;height:1px;background:#f4f4f4"></div><div class="a" style="left:224px;top:724px;width:140px;height:1px;background:#f4f4f4"></div><div class="a" style="left:26px;top:734px;width:10px;height:10px;border:1.3px solid #616161;border-radius:2px;background:#fff"></div><div class="a" style="left:57.0px;top:733.59px;font-size:11px;line-height:14px;font-weight:400;color:#0f5799;letter-spacing:-0.38px;">Ahuva Drewer</div><div class="a" style="left:232.0px;top:733.59px;font-size:11px;line-height:14px;font-weight:400;color:#0f5799;letter-spacing:-0.38px;">Joahn Peters</div><div class="a" style="left:15px;top:756px;width:33px;height:1px;background:#f4f4f4"></div><div class="a" style="left:50px;top:756px;width:172px;height:1px;background:#f4f4f4"></div><div class="a" style="left:224px;top:756px;width:140px;height:1px;background:#f4f4f4"></div></div>
<div class="a" style="left:689px;top:860px;width:344px;height:1px;background:#e0e0e0"></div>
<div class="a" style="left:689.5px;top:870.69px;font-size:11px;line-height:14px;font-weight:400;color:#242424;letter-spacing:-0.55px;">Rows: 35</div>
<div class="a" style="left:165px;top:116px;width:250px;height:466px;background:#fff;border-radius:4px;box-shadow:0 3.2px 7.2px rgba(0,0,0,.13),0 0.6px 1.8px rgba(0,0,0,.11)"></div>
<div class="a" style="left:169.5px;top:127.37px;font-size:9.9px;line-height:13px;font-weight:400;color:#5a5a5a;letter-spacing:-0.55px;">System Charts</div>
<div class="a" style="left:177.0px;top:153.39px;font-size:11px;line-height:14px;font-weight:400;color:#242424;letter-spacing:-0.28px;">Opportunities By Intake Specialist</div>
<div class="a" style="left:177.0px;top:180.39px;font-size:11px;line-height:14px;font-weight:400;color:#242424;letter-spacing:-0.28px;">Opportunities By Marketer By Month</div>
<div class="a" style="left:177.0px;top:207.39px;font-size:11px;line-height:14px;font-weight:400;color:#242424;letter-spacing:-0.28px;">Opportunities By Marketing Source By Month</div>
<div class="a" style="left:177.0px;top:234.39px;font-size:11px;line-height:14px;font-weight:400;color:#242424;letter-spacing:-0.28px;">Opportunities By Opportunity Type</div>
<div class="a" style="left:177.0px;top:261.39px;font-size:11px;line-height:14px;font-weight:400;color:#242424;letter-spacing:-0.28px;">Opportunities By Opportunity Type By Month</div>
<div class="a" style="left:177.0px;top:288.39px;font-size:11px;line-height:14px;font-weight:400;color:#242424;letter-spacing:-0.28px;">Opportunities By Owning Business Unit</div>
<div class="a" style="left:177.0px;top:315.39px;font-size:11px;line-height:14px;font-weight:400;color:#242424;letter-spacing:-0.28px;">Opportunities By Owning Business Unit By Month</div>
<div class="a" style="left:177.0px;top:342.39px;font-size:11px;line-height:14px;font-weight:400;color:#242424;letter-spacing:-0.28px;">Opportunities By Primary Role</div>
<div class="a" style="left:177.0px;top:369.39px;font-size:11px;line-height:14px;font-weight:400;color:#242424;letter-spacing:-0.28px;">Opportunities By Referral Account</div>
<div class="a" style="left:177.0px;top:396.39px;font-size:11px;line-height:14px;font-weight:400;color:#242424;letter-spacing:-0.28px;">Opportunities By Referral Account By Month</div>
<div class="a" style="left:177.0px;top:423.39px;font-size:11px;line-height:14px;font-weight:400;color:#242424;letter-spacing:-0.28px;">Opportunities By Status</div>
<div class="a" style="left:177.0px;top:450.39px;font-size:11px;line-height:14px;font-weight:400;color:#242424;letter-spacing:-0.28px;">Opportunities By Status By Month</div>
<div class="a" style="left:177.0px;top:477.39px;font-size:11px;line-height:14px;font-weight:400;color:#242424;letter-spacing:-0.28px;">Opportunities By Status Reason</div>
<div class="a" style="left:177.0px;top:504.39px;font-size:11px;line-height:14px;font-weight:400;color:#242424;letter-spacing:-0.28px;">Opportunities Per Month</div>
<div class="a" style="left:165px;top:525px;width:250px;height:27px;background:#f5f5f5"></div>
<div class="a" style="left:177.0px;top:531.39px;font-size:11px;line-height:14px;font-weight:400;color:#242424;letter-spacing:-0.28px;">Opportunities Per Quarter</div>
<div class="a" style="left:177.0px;top:558.39px;font-size:11px;line-height:14px;font-weight:400;color:#242424;letter-spacing:-0.28px;">Opportunities Per Week</div>
</body></html>
